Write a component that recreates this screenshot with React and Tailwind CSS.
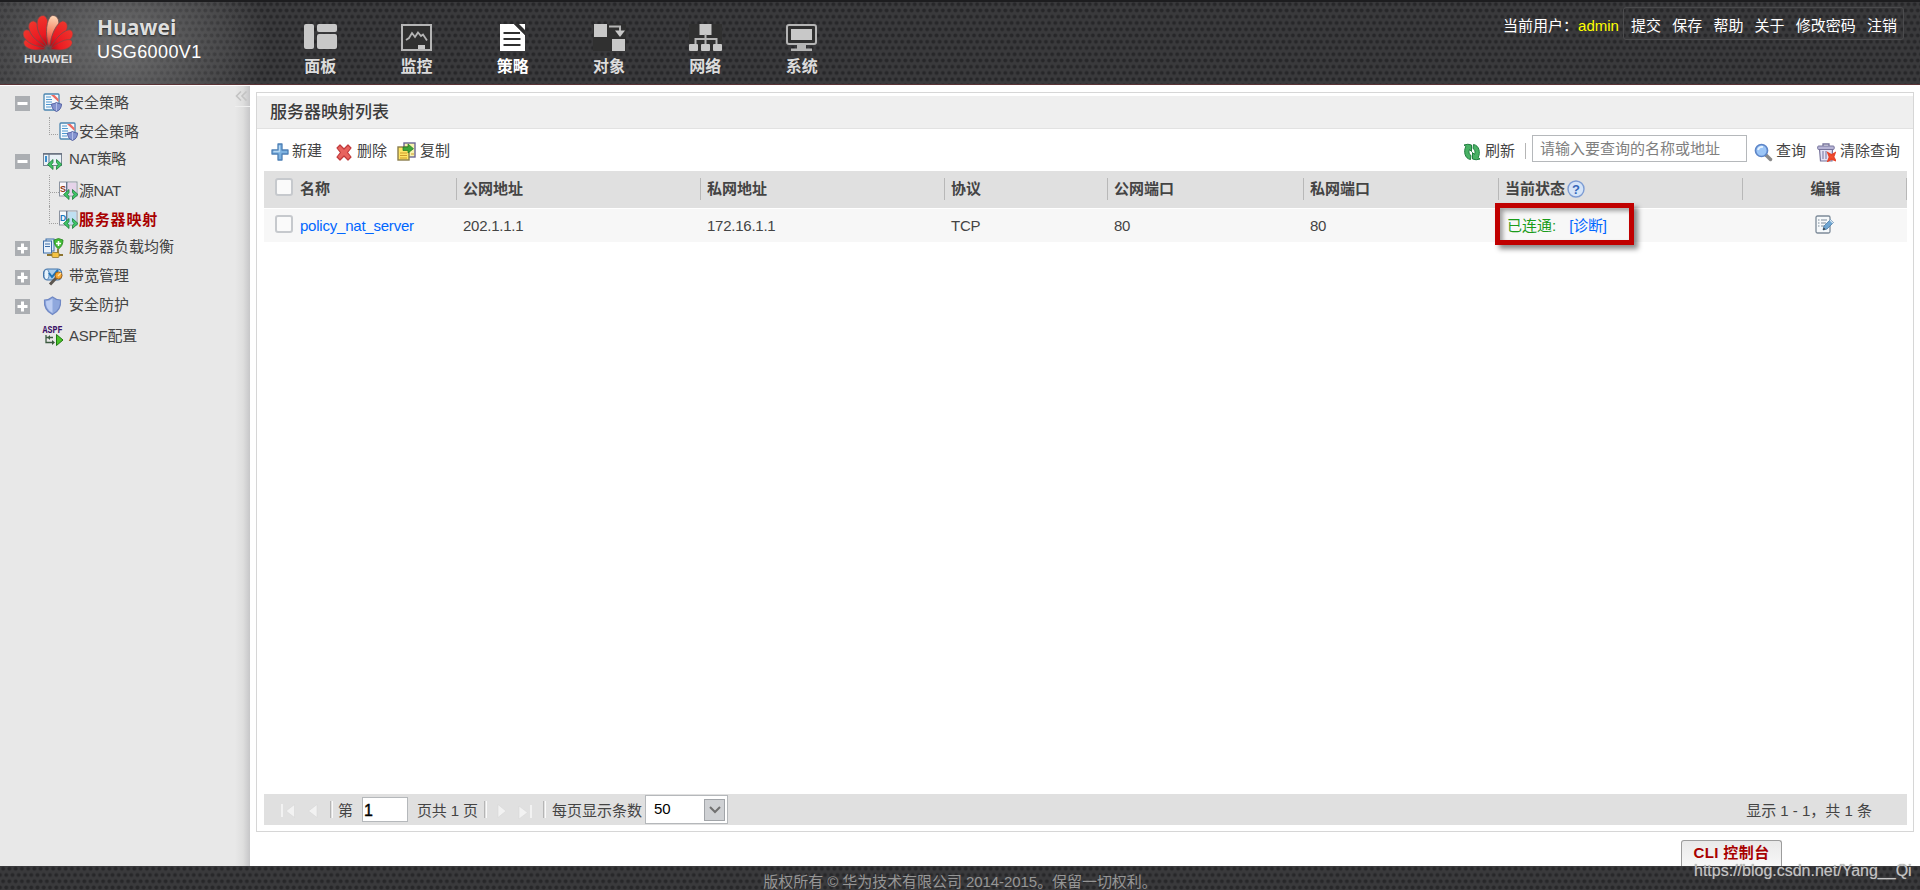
import React from "react";

const DOTS =
  "bg-[#3a3a3c] bg-[radial-gradient(circle_at_50%_50%,#272729_1.5px,transparent_2.3px),radial-gradient(circle_at_50%_50%,#272729_1.5px,transparent_2.3px)] bg-[length:6.25px_12.5px]";

function HuaweiLogo() {
  const petals = [
    { r: -72, s: 0.8 },
    { r: -53, s: 0.96 },
    { r: -32, s: 1.04 },
    { r: -11, s: 1.1 },
    { r: 11, s: 1.1 },
    { r: 32, s: 1.04 },
    { r: 53, s: 0.96 },
    { r: 72, s: 0.8 },
  ];
  return (
    <svg className="block h-[52px] w-[52px]" viewBox="0 0 52 52">
      <defs>
        <linearGradient id="petal" x1="0" y1="0" x2="0" y2="1">
          <stop offset="0" stopColor="#f0352c" />
          <stop offset="0.6" stopColor="#ea1a22" />
          <stop offset="1" stopColor="#a80d16" />
        </linearGradient>
        <linearGradient id="petalLight" x1="0" y1="0" x2="0" y2="1">
          <stop offset="0" stopColor="#ffd9b8" />
          <stop offset="0.5" stopColor="#f58a6a" />
          <stop offset="1" stopColor="#e01b22" />
        </linearGradient>
      </defs>
      {petals.map((p, i) => (
        <path
          key={i}
          transform={`translate(26 38) rotate(${p.r}) scale(${i < 4 ? p.s : -p.s} ${p.s})`}
          d="M0 -3 C-4 -12 -7 -19 -5 -26 C-4 -31 0 -33 3 -31 C6.500 -27 6 -15 0 -3Z"
          fill={i === 4 ? "url(#petalLight)" : "url(#petal)"}
          stroke="#6b5050"
          strokeWidth="0.700"
        />
      ))}
      <text
        x="26"
        y="50.500"
        textAnchor="middle"
        textLength="48"
        lengthAdjust="spacingAndGlyphs"
        fontFamily="Liberation Sans, sans-serif"
        fontWeight="bold"
        fontSize="10.5"
        fill="#e0e0e0"
      >
        HUAWEI
      </text>
    </svg>
  );
}

const navIcons = {
  panel: (
    <g fill="#c8c8c8">
      <rect x="0" y="0" width="10" height="25" rx="2" />
      <rect x="13" y="0" width="20" height="8" rx="2" />
      <rect x="13" y="10" width="20" height="15" rx="2" />
    </g>
  ),
  monitor: (
    <g>
      <rect x="2" y="1" width="29" height="25" fill="#303030" stroke="#b5b5b5" strokeWidth="2" />
      <path d="M6 16 L9 14 L12 9 L15 13 L18 8.5 L21 12 L23 10.5 L27 16.5" fill="none" stroke="#b5b5b5" strokeWidth="1.8" />
      <rect x="18" y="21" width="7" height="4" fill="#c8c8c8" />
    </g>
  ),
  policy: (
    <g>
      <path d="M4 0 H18 L29 11 V27 H4Z" fill="#fff" />
      <path d="M18 0 H22 L29 7 V11Z" fill="#303030" />
      <path d="M23 0 H29 V6Z" fill="#fff" />
      <path d="M7.500 9 H24 M7.500 15 H24.500 M7.500 21 H24.500" stroke="#303030" strokeWidth="2" />
    </g>
  ),
  object: (
    <g>
      <rect x="0" y="0" width="33" height="27" fill="#303030" />
      <rect x="1" y="0" width="13" height="13" fill="#c8c8c8" />
      <rect x="19" y="15" width="13" height="12" fill="#c8c8c8" />
      <path d="M16 2.500 H27 V8" fill="none" stroke="#b5b5b5" strokeWidth="2" />
      <path d="M22 6.500 H32 L27 13Z" fill="#c8c8c8" />
    </g>
  ),
  network: (
    <g>
      <rect x="0" y="0" width="33" height="27" fill="#303030" />
      <g fill="#c8c8c8">
        <rect x="10.500" y="0" width="12" height="11" />
        <rect x="0" y="20" width="9" height="7" rx="1" />
        <rect x="12" y="20" width="9" height="7" rx="1" />
        <rect x="24" y="20" width="9" height="7" rx="1" />
      </g>
      <path d="M16.500 10 V20 M6.500 20 V15 H27.500 V20" fill="none" stroke="#b5b5b5" strokeWidth="2" />
    </g>
  ),
  system: (
    <g>
      <rect x="2" y="1" width="29" height="19" rx="2" fill="#303030" stroke="#b5b5b5" strokeWidth="2" />
      <rect x="6" y="5" width="21" height="11" fill="#c8c8c8" />
      <path d="M12 20 H21 V24.500 H27 V27 H6 V24.500 H12Z" fill="#b5b5b5" />
    </g>
  ),
};

const nav = [
  ["panel", "面板"],
  ["monitor", "监控"],
  ["policy", "策略"],
  ["object", "对象"],
  ["network", "网络"],
  ["system", "系统"],
];

function Arrows() {
  return (
    <g fill="#3fc466" stroke="#1c7a3a" strokeWidth="0.8">
      <path d="M10 8.500 V11.500 L8.500 13.500 L10 15.500 V18.500 L4.500 13.500Z" />
      <path d="M13.500 8.500 V11.500 L15 13.500 L13.500 15.500 V18.500 L19 13.500Z" />
    </g>
  );
}

const treeIcons = {
  policy: (
    <g>
      <rect x="1" y="1" width="15" height="16" rx="1" fill="#f4f9fd" stroke="#4b85b0" strokeWidth="1.300" />
      <path d="M3 4 H8 M3 6.500 H9 M3 9 H9 M3 11.500 H8 M3 14 H8" stroke="#4e97cf" strokeWidth="1.200" />
      <path d="M8 2 H11.500 L15.500 6 V9Z" fill="#ee6a60" />
      <path d="M8.500 11 Q11 11 13.500 9.500 Q16 11 18.500 11 Q18.500 16.500 13.500 18.500 Q8.500 16.500 8.500 11Z" fill="#8493cf" stroke="#5763a4" />
      <path d="M13.500 10 V18" stroke="#b4bfe8" />
    </g>
  ),
  nat: (
    <g>
      <rect x="0.500" y="2.500" width="18" height="12" fill="#e9f1f7" stroke="#7a8594" />
      <path d="M0 3 H19" stroke="#68717f" strokeWidth="1.500" />
      <path d="M3 5 V11" stroke="#3c8dcc" strokeWidth="2" />
      <path d="M6 3 V15" stroke="#58718a" />
      <Arrows />
    </g>
  ),
  snat: (
    <g>
      <rect x="0.500" y="1" width="17.500" height="14" fill="#fbf7fb" stroke="#8b93a0" />
      <rect x="9" y="2" width="8" height="12" fill="#e6d3ea" />
      <rect x="7" y="1" width="1.500" height="14" fill="#65758c" />
      <text x="1" y="11" fontFamily="Liberation Sans" fontWeight="bold" fontSize="9" fill="#8b3210">S</text>
      <Arrows />
    </g>
  ),
  dnat: (
    <g>
      <rect x="0.500" y="1" width="17.500" height="14" fill="#f7fafd" stroke="#8b93a0" />
      <rect x="9" y="2" width="8" height="12" fill="#bfe0f2" />
      <rect x="7" y="1" width="1.500" height="14" fill="#65758c" />
      <text x="1" y="11" fontFamily="Liberation Sans" fontWeight="bold" fontSize="8.500" fill="#1877bd">D</text>
      <Arrows />
    </g>
  ),
  server: (
    <g>
      <rect x="3" y="1" width="8" height="12" fill="#dbe9f8" stroke="#3d6ea8" />
      <rect x="0.500" y="3" width="8" height="12" fill="#e8f1fb" stroke="#3d6ea8" />
      <path d="M2 6 H7 M2 8.500 H7" stroke="#3d6ea8" />
      <path d="M11 2 L15.500 0.500 L20 2 Q20 8 15.500 11 Q11 8 11 2Z" fill="#42bd35" stroke="#23801c" strokeWidth="0.800" />
      <path d="M15.500 3 V8 M13 5.500 H18" stroke="#fff" strokeWidth="1.600" />
      <path d="M4 17 H20 M15 11 V16" stroke="#8c7430" strokeWidth="1.800" />
      <rect x="9" y="14.500" width="7" height="5" rx="1" fill="#f5c342" stroke="#8c7430" strokeWidth="0.800" />
    </g>
  ),
  bandwidth: (
    <g>
      <rect x="0.600" y="2" width="18" height="11" rx="4" fill="#a9cdee" stroke="#4474a8" strokeWidth="1.200" />
      <ellipse cx="3.500" cy="7.500" rx="2.500" ry="5" fill="#e6f3fc" stroke="#4474a8" strokeWidth="0.800" />
      <path d="M6 6 L9 10 L15 3" fill="none" stroke="#1d72b8" strokeWidth="2" />
      <path d="M7 17.500 L14 10" stroke="#5c5650" strokeWidth="3" />
      <circle cx="15.500" cy="8.500" r="3.500" fill="#f3a634" stroke="#a3641a" />
      <path d="M15 9 L18 6" stroke="#ffe2a3" strokeWidth="1.500" />
    </g>
  ),
  shield: (
    <g>
      <path d="M1.500 4 Q6 4 9.500 1 Q13 4 17.500 4 Q18.500 14 9.500 18.500 Q0.500 14 1.500 4Z" fill="#8fa8dd" stroke="#7088c4" strokeWidth="1.200" />
      <path d="M9.500 2.500 Q6.500 5 3 5.200 Q2.500 13 9.500 17Z" fill="#bccdf2" />
    </g>
  ),
  aspf: (
    <g>
      <text x="-0.500" y="6.500" textLength="20" lengthAdjust="spacingAndGlyphs" fontFamily="Liberation Mono, monospace" fontWeight="bold" fontSize="10" fill="#3b1066">ASPF</text>
      <path d="M3 9 V16.500 H9 M3 11.500 H10" fill="none" stroke="#3c5a40" strokeWidth="1.300" />
      <path d="M7 9 L4.500 11.500 L7 14Z M9 14 L12 16.500 L9 19Z" fill="#3c5a40" />
      <path d="M13.500 8.500 L20 14 L13.500 19.500Z" fill="#4bc32a" stroke="#1f7812" />
    </g>
  ),
};

function TreeIcon({ name }) {
  return (
    <svg className="block h-[20px] w-[20px] shrink-0 overflow-visible" viewBox="0 0 20 20">
      {treeIcons[name]}
    </svg>
  );
}

function Toggle({ open }) {
  return (
    <svg className="block h-[15px] w-[15px] shrink-0" viewBox="0 0 15 15">
      <rect width="15" height="15" fill="#abaeb2" />
      <path d={open ? "M2.500 7.500 H12.500" : "M2.500 7.500 H12.500 M7.500 2.500 V12.500"} stroke="#fff" strokeWidth="3" />
    </svg>
  );
}

function TreeRow({ h, toggle, icon, label, labelClass = "" }) {
  return (
    <div className={`flex items-center pl-[15px] ${h}`}>
      <div className="w-[28px] shrink-0 pt-px">{toggle && <Toggle open={toggle === "open"} />}</div>
      <TreeIcon name={icon} />
      <span className={`ml-[6px] ${labelClass}`}>{label}</span>
    </div>
  );
}

function TreeChild({ h, icon, label, labelClass = "", last }) {
  return (
    <div className={`flex pl-[49px] ${h}`}>
      <div className={`w-[10px] shrink-0 ${last ? "" : "border-l border-dotted border-[#a0a0a0]"}`}>
        <div
          className={`h-[18px] w-[9px] border-b border-dotted border-[#a0a0a0] ${last ? "border-l" : ""}`}
        />
      </div>
      <div className="flex items-center">
        <TreeIcon name={icon} />
        <span className={labelClass}>{label}</span>
      </div>
    </div>
  );
}

function Check() {
  return <div className="h-[18px] w-[18px] shrink-0 rounded-[3px] border-2 border-[#c6c9cd] bg-[#fafafa]" />;
}

const cols = [
  ["w-[244px]", "公网地址", "202.1.1.1"],
  ["w-[244px]", "私网地址", "172.16.1.1"],
  ["w-[163px]", "协议", "TCP"],
  ["w-[196px]", "公网端口", "80"],
  ["w-[195px]", "私网端口", "80"],
];

function PageArrow({ w, children }) {
  return (
    <svg className={`block h-[18px] shrink-0 ${w}`} viewBox="0 0 16 18" preserveAspectRatio="xMinYMid meet">
      {children}
    </svg>
  );
}

function PagerSep({ className }) {
  return <div className={`h-[17px] w-[3px] shrink-0 border-x border-l-[#b5b5b5] border-r-[#fafafa] ${className}`} />;
}

export default function App() {
  return (
    <div className="relative flex h-[890px] w-[1920px] flex-col overflow-hidden bg-white font-['Liberation_Sans','Noto_Sans_CJK_SC',sans-serif] text-[15px] leading-[20px] whitespace-nowrap text-[#444]">
      <header className={`h-[85px] shrink-0 border-t-2 border-b border-t-[#1d1d1f] border-b-[#5a3336] bg-[position:5.3px_-4px,2.2px_2.2px] ${DOTS}`}>
        <div className="flex h-full bg-[radial-gradient(ellipse_150px_110px_at_120px_42px,rgba(150,150,150,0.55),rgba(120,120,120,0)),linear-gradient(to_right,rgba(120,120,120,0.12),transparent_250px)]">
          <div className="ml-[22px] mt-[10px]">
            <HuaweiLogo />
          </div>
          <div className="ml-[23px] mt-[12px] w-[191px]">
            <div className="h-[26px] font-['Open_Sans'] text-[21px] leading-[27px] font-bold text-[#dedede] [text-shadow:0_1px_2px_#222]">Huawei</div>
            <div className="text-[18px] leading-[24px] tracking-[0.4px] text-white">USG6000V1</div>
          </div>
          <nav className="ml-[-16px] flex">
            {nav.map(([id, label]) => (
              <div key={id} className="flex w-[96.300px] flex-col items-center pt-[22px]">
                <svg className="block h-[27px] w-[33px]" viewBox="0 0 33 27">
                  {navIcons[id]}
                </svg>
                <span className={`mt-[5px] text-[16px] leading-[22px] font-bold ${id === "policy" ? "text-white" : "text-[#dcdcdc]"}`}>
                  {label}
                </span>
              </div>
            ))}
          </nav>
          <div className="mt-[5px] mr-[16px] ml-auto flex h-[33px] items-center text-white">
            <span className="mt-[4px]">当前用户：</span>
            <span className="mt-[4px] mr-[4px] text-[#ffff00]">admin</span>
            <div className="flex h-[33px] items-center gap-[11.200px] rounded-[3px] border border-[#4b4b4d] pt-[5px] pr-[6px] pl-[7px]">
              {["提交", "保存", "帮助", "关于", "修改密码", "注销"].map((t) => (
                <span key={t}>{t}</span>
              ))}
            </div>
          </div>
        </div>
      </header>

      <div className="flex h-[781px] shrink-0">
        <aside className="relative w-[250px] shrink-0 border-t border-white bg-[linear-gradient(to_right,#e8e8e8_235px,#dedede_243px,#c6c6c8_250px)] pt-[2px]">
          <TreeRow h="h-[29px]" toggle="open" icon="policy" label="安全策略" />
          <TreeChild h="h-[29px]" icon="policy" label="安全策略" last />
          <TreeRow h="h-[29px]" toggle="open" icon="nat" label="NAT策略" labelClass="-mt-[3px] tracking-[-0.4px]" />
          <TreeChild h="h-[31px]" icon="snat" label="源NAT" labelClass="tracking-[-0.6px]" />
          <TreeChild h="h-[27px]" icon="dnat" label="服务器映射" labelClass="font-bold text-[#a80000] tracking-[0.8px]" last />
          <TreeRow h="h-[29px]" toggle="closed" icon="server" label="服务器负载均衡" labelClass="-mt-px" />
          <TreeRow h="h-[29px]" toggle="closed" icon="bandwidth" label="带宽管理" labelClass="-mt-px" />
          <TreeRow h="h-[29px]" toggle="closed" icon="shield" label="安全防护" labelClass="-mt-[2px]" />
          <TreeRow h="h-[31px]" icon="aspf" label="ASPF配置" labelClass="tracking-[-0.2px]" />
          <div className="absolute top-0 right-0 flex h-[21px] w-[15px] items-center border-b border-[#efefef]">
            <svg className="block h-[10px] w-[13px]" viewBox="0 0 13 10">
              <path d="M6 0.500 L1.500 5 L6 9.500 M11.500 0.500 L7 5 L11.500 9.500" fill="none" stroke="#c3c3c3" strokeWidth="1.600" />
            </svg>
          </div>
        </aside>

        <main className="flex w-[1670px] flex-col pt-[7px] pl-[6px]">
          <section className="flex h-[740px] w-[1658px] shrink-0 flex-col border border-[#d6d6d6] pt-[3px]">
            <h1 className="flex h-[33px] shrink-0 items-center border-b border-[#e2e2e2] bg-[#efefef] pt-[2px] pl-[13px] text-[17px] font-medium text-[#3c3c3c]">服务器映射列表</h1>

            <div className="flex h-[42px] shrink-0 items-center pt-px pl-[14px]">
              <svg className="mt-[3px] block h-[18px] w-[18px]" viewBox="0 0 18 18">
                <path d="M7 1 H11 V7 H17 V11 H11 V17 H7 V11 H1 V7 H7Z" fill="#7db2e0" stroke="#4c7fb5" strokeWidth="1.300" strokeLinejoin="round" />
                <path d="M8.500 2.500 V8.500 H2.500" fill="none" stroke="#b9d9f3" strokeWidth="1.300" />
              </svg>
              <span className="ml-[3px] w-[44px]">新建</span>
              <svg className="mt-[3px] block h-[17px] w-[16px]" viewBox="0 0 16 17">
                <path d="M4 1 L8 5 L12 1 L15 4 L11.500 8.500 L15 13 L12 16 L8 12 L4 16 L1 13 L4.500 8.500 L1 4Z" fill="#e8635e" stroke="#c03a3c" strokeWidth="1.200" strokeLinejoin="round" />
              </svg>
              <span className="ml-[5px] w-[40px]">删除</span>
              <svg className="mt-px block h-[19px] w-[19px]" viewBox="0 0 19 19">
                <rect x="7" y="1" width="11" height="14" fill="#f7f3b0" stroke="#6b6795" strokeWidth="1.400" />
                <rect x="1" y="5" width="11" height="13" fill="#ffe566" stroke="#8a7d4c" strokeWidth="1.400" />
                <path d="M3 11 H10 M3 13.500 H10 M3 16 H10 M14 12 H17" stroke="#cf9b2c" />
                <path d="M6 5 H11 V2 L16.500 6.700 L11 11 V8.500 H6Z" fill="#3da63a" stroke="#22731f" strokeWidth="0.700" />
              </svg>
              <span className="ml-[4px]">复制</span>

              <div className="mr-[13px] ml-auto flex items-center">
                <svg className="mt-[3px] block h-[18px] w-[18px]" viewBox="0 0 18 18">
                  <path d="M7.500 16.500 C1.500 15.500 0.500 8 2.800 3.500 L1 2 Q5 0.500 8.500 2 V8.500 L6.500 6.500 C5.500 9 5.800 11.500 8 12.500Z" fill="#49b265" stroke="#217e40" strokeWidth="1" strokeLinejoin="round" />
                  <path d="M10.500 1.500 C16.500 2.500 17.500 10 15.200 14.500 L17 16 Q13 17.500 9.500 16 V9.500 L11.500 11.500 C12.500 9 12.200 6.500 10 5.500Z" fill="#49b265" stroke="#217e40" strokeWidth="1" strokeLinejoin="round" />
                </svg>
                <span className="ml-[4px] w-[40px]">刷新</span>
                <div className="mr-[6px] h-[16px] w-px bg-[#b5b5b5]" />
                <div className="mb-[4px] flex h-[27px] w-[215px] items-center border border-[#b5b8bb] bg-white pl-[7px] text-[#808080]">请输入要查询的名称或地址</div>
                <svg className="mt-[3px] ml-[7px] block h-[19px] w-[19px]" viewBox="0 0 19 19">
                  <path d="M12 12 L16.500 16.500" stroke="#8a8a8a" strokeWidth="3.500" strokeLinecap="round" />
                  <circle cx="7.500" cy="7.500" r="6" fill="#9cc6f7" stroke="#5e86c8" strokeWidth="1.700" />
                  <path d="M4 7 Q5 3.500 9 4" fill="none" stroke="#e5f2ff" strokeWidth="1.800" />
                </svg>
                <span className="ml-[3px] w-[41px]">查询</span>
                <svg className="mt-[3px] block h-[19px] w-[19px]" viewBox="0 0 19 19">
                  <path d="M2.500 6 H15.500 L15 18 H3.500Z" fill="#e4e2f5" stroke="#77749c" strokeWidth="1.200" />
                  <path d="M6 8 V16 M9 8 V16" stroke="#8e8bb3" strokeWidth="1.300" />
                  <rect x="0.700" y="3" width="16.500" height="3.500" rx="1" fill="#b7b4d6" stroke="#77749c" />
                  <path d="M6 3 V1 H12 V3" fill="none" stroke="#77749c" strokeWidth="1.300" />
                  <path d="M11 10 L14.500 12 L18 10 L16.500 14 L18.500 17.500 L14.500 16 L11 18 L12.500 14Z" fill="#f4502e" stroke="#e8432a" strokeWidth="1.600" />
                </svg>
                <span className="ml-[4px]">清除查询</span>
              </div>
            </div>

            <div className="mx-[7px] shrink-0">
              <div className="flex h-[37px] w-[1643px] items-center bg-[#e0e0e0] pb-[2px] font-bold">
                <div className="flex w-[192px] shrink-0 items-center pl-[11px]">
                  <div className="-mt-[3px]">
                    <Check />
                  </div>
                  <span className="ml-[7px]">名称</span>
                </div>
                {cols.map(([w, label], i) => (
                  <div key={i} className={`flex h-[22px] shrink-0 items-center border-l border-[#b8b8b8] pl-[6px] ${w}`}>
                    {label}
                  </div>
                ))}
                <div className="flex h-[22px] w-[244px] shrink-0 items-center border-l border-[#b8b8b8] pl-[6px]">
                  当前状态
                  <svg className="ml-[2px] block h-[18px] w-[18px]" viewBox="0 0 18 18">
                    <circle cx="9" cy="9" r="8" fill="#d5e4f8" stroke="#7c9cd4" strokeWidth="1.400" />
                    <text x="9" y="13.500" textAnchor="middle" fontFamily="Liberation Sans" fontWeight="bold" fontSize="13" fill="#3566b8">?</text>
                  </svg>
                </div>
                <div className="flex h-[22px] grow items-center justify-center border-x border-[#b8b8b8] pl-[2px]">编辑</div>
              </div>
              <div className="mt-px flex h-[33px] w-[1643px] items-center bg-[#f7f7f7] pb-[2px]">
                <div className="flex w-[192px] shrink-0 items-center pl-[11px]">
                  <div className="-mt-px">
                    <Check />
                  </div>
                  <span className="mt-[2px] ml-[7px] tracking-[-0.22px] text-[#0066ff]">policy_nat_server</span>
                </div>
                {cols.map(([w, , value], i) => (
                  <div key={i} className={`shrink-0 pt-[2px] pl-[7px] tracking-[-0.25px] ${w}`}>
                    {value}
                  </div>
                ))}
                <div className="relative w-[244px] shrink-0 pt-[2px] pl-[9px]">
                  <span className="text-[#1a9c1a]">已连通:</span>
                  <span className="ml-[13px] tracking-[-0.2px] text-[#0066ff]">[诊断]</span>
                  <div className="absolute -top-[11px] -left-[3px] h-[42px] w-[139px] border-[5px] border-[#c00000] shadow-[4px_4px_5px_rgba(0,0,0,0.45),inset_3px_3px_4px_rgba(0,0,0,0.35)]" />
                </div>
                <div className="flex grow justify-center">
                  <svg className="block h-[19px] w-[20px]" viewBox="0 0 20 19">
                    <rect x="1" y="1" width="14" height="17" rx="1.500" fill="#f6f9fb" stroke="#7d8b99" strokeWidth="1.300" />
                    <path d="M3 5 H4.500 M6 5 H12 M3 8 H4.500 M6 8 H11 M3 11 H4.500 M6 11 H9" stroke="#7d8b99" />
                    <path d="M8 15 L9 11 L15.500 4.500 L18.500 7.500 L12 14Z" fill="#6fa6d2" stroke="#4d7ca6" strokeWidth="0.800" />
                    <path d="M8 15 L8.700 12.500 L10.500 14.300Z" fill="#333" />
                    <path d="M15 5 L18 8" stroke="#d9e6f0" strokeWidth="1.200" />
                  </svg>
                </div>
              </div>
            </div>

            <footer className="mx-[7px] mt-auto mb-[6px] flex h-[31px] w-[1643px] shrink-0 items-center bg-[#e0e0e0] pt-[2px]">
              <PageArrow w="ml-[16px] w-[16px]">
                <path d="M2 2 V15" stroke="#f2f2f2" strokeWidth="2" />
                <path d="M14.500 2.500 V15.500 L6 9Z" fill="#f2f2f2" stroke="#d6d6d6" strokeWidth="0.600" />
              </PageArrow>
              <PageArrow w="ml-[11px] w-[16px]">
                <path d="M10 2.500 V15.500 L1.500 9Z" fill="#f2f2f2" stroke="#d6d6d6" strokeWidth="0.600" />
              </PageArrow>
              <PagerSep className="-mt-[3px] ml-[7px]" />
              <span className="ml-[5px] w-[24px]">第</span>
              <div className="-mt-[2px] flex h-[25px] w-[46px] shrink-0 items-center border border-[#b5b8bb] bg-white pt-[3px] pl-px text-[16px] text-black [-webkit-text-stroke:0.4px_black]">1</div>
              <span className="ml-[9px] w-[67px] tracking-[-0.15px]">页共 1 页</span>
              <PagerSep className="-mt-[3px]" />
              <PageArrow w="ml-[9px] w-[16px]">
                <path d="M2 2.500 V15.500 L10 9Z" fill="#f2f2f2" stroke="#d6d6d6" strokeWidth="0.600" />
              </PageArrow>
              <PageArrow w="ml-[6px] w-[16px]">
                <path d="M1 4 V17 L9.500 10.500Z" fill="#f2f2f2" stroke="#d6d6d6" strokeWidth="0.600" />
                <path d="M13 3 V16" stroke="#f2f2f2" strokeWidth="2" />
              </PageArrow>
              <PagerSep className="-mt-[3px] ml-[9px]" />
              <span className="ml-[6px] w-[92px]">每页显示条数</span>
              <div className="-mt-[2px] ml-px flex h-[29px] w-[83px] shrink-0 items-center border border-[#b5b8bb] bg-white pl-[8px] text-black">
                <span className="pb-[2px]">50</span>
                <div className="mr-[2px] ml-auto flex h-[22px] w-[21px] items-center justify-center border border-[#a2a5a9] bg-[#cfd1d4]">
                  <svg className="block h-[8px] w-[12px]" viewBox="0 0 12 8">
                    <path d="M1 1 L6 6 L11 1" fill="none" stroke="#707070" strokeWidth="2" />
                  </svg>
                </div>
              </div>
              <span className="mr-[35px] ml-auto pt-px">显示 1 - 1，共 1 条</span>
            </footer>
          </section>
          <div className="mt-auto ml-[1425px] flex h-[26px] w-[101px] items-center justify-center rounded-t-[3px] border border-b-0 border-[#9c9c9c] bg-[linear-gradient(#e9e9e9,#f7f7f7)] pb-[2px] font-bold tracking-[0.400px] text-[#a80000]">
            CLI 控制台
          </div>
        </main>
      </div>

      <footer className={`flex h-[24px] shrink-0 items-center justify-center bg-[position:0px_-3.500px,3.125px_2.750px] pt-[7px] tracking-[-0.060px] text-[#969696] ${DOTS}`}>
        版权所有 © 华为技术有限公司 2014-2015。保留一切权利。
      </footer>
      <div className="absolute top-[861px] left-[1694px] text-[16px] text-[#c4c4c4] [text-shadow:0_0_1px_#777]">https://blog.csdn.net/Yang__Qi</div>
    </div>
  );
}
